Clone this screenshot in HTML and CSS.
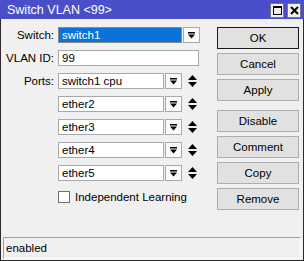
FILE: index.html
```html
<!DOCTYPE html>
<html lang="en">
<head>
    <meta charset="UTF-8">
    <meta name="viewport" content="width=device-width, initial-scale=1.0">
    <title>Switch VLAN &lt;99&gt;</title>
    <link rel="stylesheet" href="styles.css">
</head>
<body>
    <div class="window">
        <!-- Title bar -->
        <div class="titlebar">
            <span class="title">Switch VLAN &lt;99&gt;</span>
            <div class="title-btns">
                <span class="tbtn">
                    <svg width="9" height="9" viewBox="0 0 9 9"><rect x="0.5" y="0.5" width="8" height="8" fill="none" stroke="#000"/><rect x="0" y="0" width="9" height="2" fill="#000"/></svg>
                </span>
                <span class="tbtn">
                    <svg width="9" height="9" viewBox="0 0 9 9"><path d="M1 1 L8 8 M8 1 L1 8" stroke="#000" stroke-width="2"/></svg>
                </span>
            </div>
        </div>

        <div class="main">
            <!-- Form fields -->
            <div class="form">
                <label class="lbl">Switch:</label>
                <div class="field">
                    <div class="input selected w-switch">switch1</div>
                    <span class="drop"><svg width="7" height="7" viewBox="0 0 7 7"><rect x="0" y="0" width="7" height="1.5" fill="#000"/><path d="M0 2.5 H7 L3.5 6.5 Z" fill="#000"/></svg></span>
                </div>

                <label class="lbl">VLAN ID:</label>
                <div class="field">
                    <div class="input w-full">99</div>
                </div>

                <label class="lbl">Ports:</label>
                <div class="field">
                    <div class="input w-port">switch1 cpu</div>
                    <span class="drop"><svg width="7" height="7" viewBox="0 0 7 7"><rect x="0" y="0" width="7" height="1.5" fill="#000"/><path d="M0 2.5 H7 L3.5 6.5 Z" fill="#000"/></svg></span>
                    <span class="updown"><svg width="9" height="12" viewBox="0 0 9 12"><path d="M4.5 0 L9 5 H0 Z M0 7 H9 L4.5 12 Z" fill="#000"/></svg></span>
                </div>

                <span></span>
                <div class="field">
                    <div class="input w-port">ether2</div>
                    <span class="drop"><svg width="7" height="7" viewBox="0 0 7 7"><rect x="0" y="0" width="7" height="1.5" fill="#000"/><path d="M0 2.5 H7 L3.5 6.5 Z" fill="#000"/></svg></span>
                    <span class="updown"><svg width="9" height="12" viewBox="0 0 9 12"><path d="M4.5 0 L9 5 H0 Z M0 7 H9 L4.5 12 Z" fill="#000"/></svg></span>
                </div>

                <span></span>
                <div class="field">
                    <div class="input w-port">ether3</div>
                    <span class="drop"><svg width="7" height="7" viewBox="0 0 7 7"><rect x="0" y="0" width="7" height="1.5" fill="#000"/><path d="M0 2.5 H7 L3.5 6.5 Z" fill="#000"/></svg></span>
                    <span class="updown"><svg width="9" height="12" viewBox="0 0 9 12"><path d="M4.5 0 L9 5 H0 Z M0 7 H9 L4.5 12 Z" fill="#000"/></svg></span>
                </div>

                <span></span>
                <div class="field">
                    <div class="input w-port">ether4</div>
                    <span class="drop"><svg width="7" height="7" viewBox="0 0 7 7"><rect x="0" y="0" width="7" height="1.5" fill="#000"/><path d="M0 2.5 H7 L3.5 6.5 Z" fill="#000"/></svg></span>
                    <span class="updown"><svg width="9" height="12" viewBox="0 0 9 12"><path d="M4.5 0 L9 5 H0 Z M0 7 H9 L4.5 12 Z" fill="#000"/></svg></span>
                </div>

                <span></span>
                <div class="field">
                    <div class="input w-port">ether5</div>
                    <span class="drop"><svg width="7" height="7" viewBox="0 0 7 7"><rect x="0" y="0" width="7" height="1.5" fill="#000"/><path d="M0 2.5 H7 L3.5 6.5 Z" fill="#000"/></svg></span>
                    <span class="updown"><svg width="9" height="12" viewBox="0 0 9 12"><path d="M4.5 0 L9 5 H0 Z M0 7 H9 L4.5 12 Z" fill="#000"/></svg></span>
                </div>

                <span></span>
                <div class="field check-row">
                    <span class="checkbox"></span>
                    <span>Independent Learning</span>
                </div>
            </div>

            <!-- Action buttons -->
            <div class="buttons">
                <div class="btn default">OK</div>
                <div class="btn">Cancel</div>
                <div class="btn">Apply</div>
                <div class="btn gap">Disable</div>
                <div class="btn">Comment</div>
                <div class="btn">Copy</div>
                <div class="btn">Remove</div>
            </div>
        </div>

        <!-- Status bar -->
        <div class="status">enabled</div>
    </div>
</body>
</html>
```

FILE: styles.css
```css
body {
    margin: 0;
    font-family: "Liberation Sans", Arial, sans-serif;
    font-size: 11px;
    color: #000;
    background: #f0f0f0;
}

.window {
    width: 304px;
    height: 261px;
    box-sizing: border-box;
    background: #f0f0f0;
    border: 1px solid #2b2b2b;
    border-top: none;
    display: flex;
    flex-direction: column;
}

.titlebar {
    height: 19px;
    margin: 0 -1px;
    background: #4b4ec9;
    color: #fff;
    display: flex;
    align-items: center;
    justify-content: space-between;
    padding: 0 3px 0 7px;
}

.title {
    font-size: 12.5px;
}

.title-btns {
    display: flex;
    gap: 3px;
    margin-top: 2px;
}

.tbtn {
    width: 12px;
    height: 13px;
    background: #f0f0f0;
    border: 1px solid #777;
    display: flex;
    align-items: center;
    justify-content: center;
}

.main {
    flex: 1;
    display: flex;
    justify-content: space-between;
    padding: 8px 4px 0 0;
}

.form {
    display: grid;
    grid-template-columns: 53px auto;
    column-gap: 4px;
    row-gap: 7px;
    align-content: start;
    align-items: center;
    font-size: 11.5px;
}

.lbl {
    text-align: right;
}

.field {
    display: flex;
    align-items: center;
    height: 16px;
}

.input {
    height: 16px;
    box-sizing: border-box;
    background: #fff;
    border: 1px solid #a9a9a9;
    padding: 0 3px;
    line-height: 14px;
    white-space: nowrap;
}

.input.selected {
    background: #0a72d8;
    color: #fff;
    border-color: #8a8a8a;
}

.w-switch { width: 124px; }
.w-full { width: 141px; }
.w-port { width: 106px; }

.drop {
    width: 17px;
    height: 16px;
    box-sizing: border-box;
    margin-left: 1px;
    background: #fafafa;
    border: 1px solid #a9a9a9;
    display: flex;
    align-items: center;
    justify-content: center;
}

.updown {
    margin-left: 6px;
    display: flex;
}

.check-row {
    margin-top: 1px;
    gap: 5px;
}

.checkbox {
    width: 12px;
    height: 12px;
    box-sizing: border-box;
    background: #fff;
    border: 1px solid #707070;
}

.buttons {
    display: flex;
    flex-direction: column;
    gap: 4px;
}

.btn {
    width: 82px;
    height: 22px;
    box-sizing: border-box;
    background: #e1e1e1;
    border: 1px solid #adadad;
    display: flex;
    align-items: center;
    justify-content: center;
    font-size: 11.5px;
}

.btn.default {
    border: 1px solid #1a1a1a;
}

.btn.gap {
    margin-top: 5px;
}

.status {
    height: 22px;
    box-sizing: border-box;
    margin: 0 2px 1px 2px;
    border-top: 1px solid #a0a0a0;
    border-left: 1px solid #a0a0a0;
    border-right: 1px solid #fff;
    border-bottom: 1px solid #fff;
    padding: 0 2px;
    line-height: 20px;
    font-size: 11.5px;
}
```
